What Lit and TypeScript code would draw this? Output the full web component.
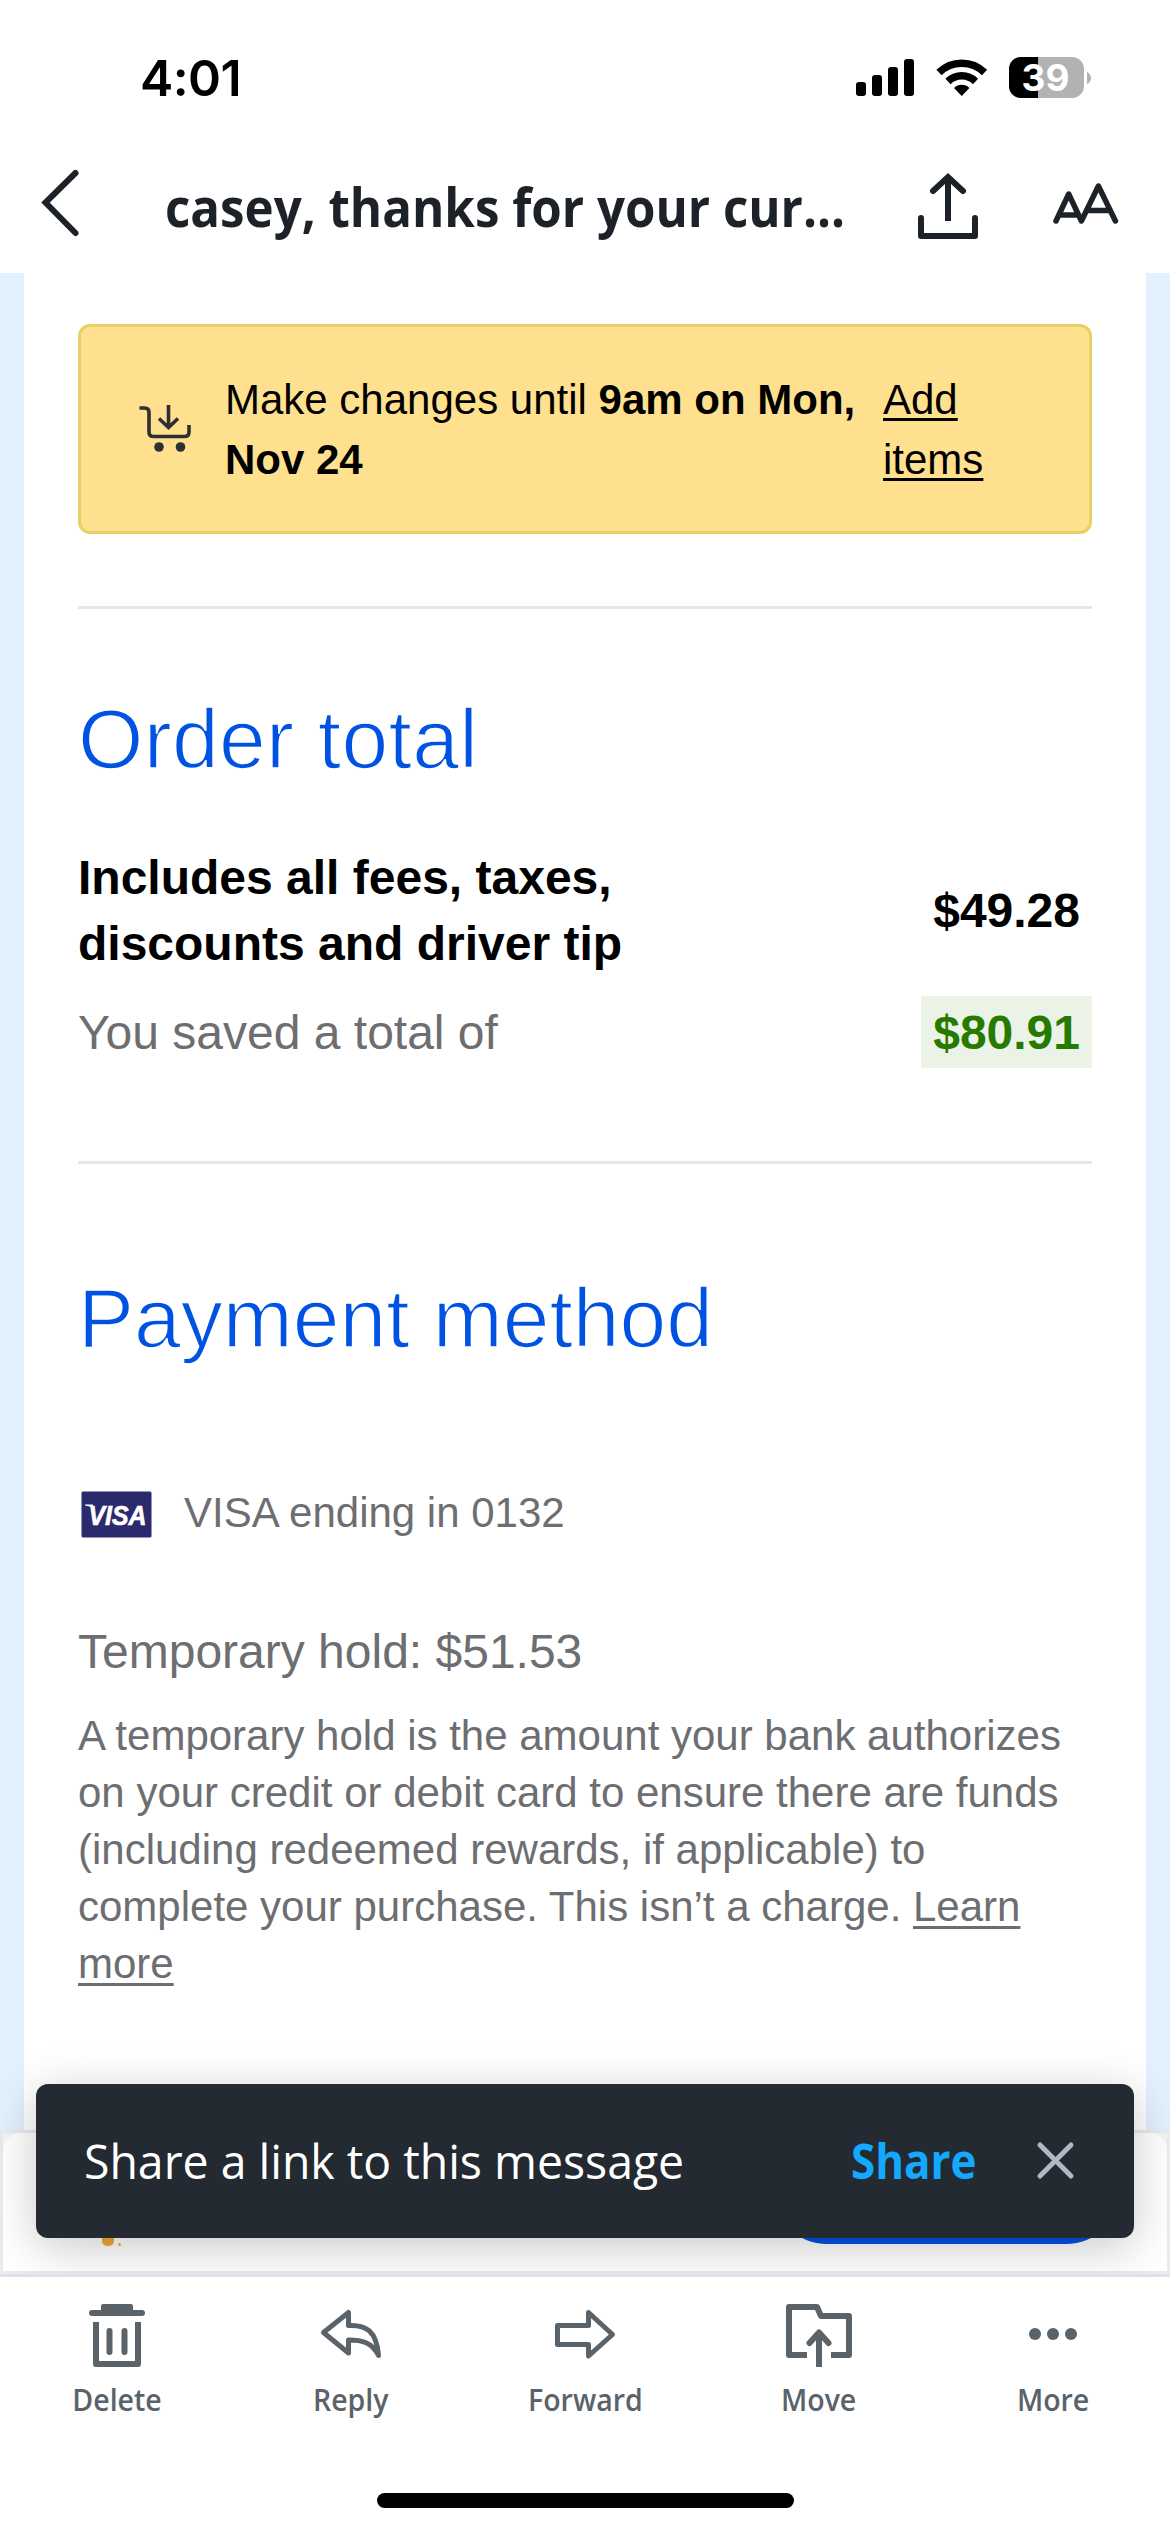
import { LitElement, html, css, svg } from "lit";
import { customElement } from "lit/decorators.js";

const actions = [
  {
    label: "Delete",
    icon: svg`<path fill="currentColor" stroke="none" d="M14 9h43a3 3 0 0 1 0 6H7a3 3 0 0 1 0-6h9V5q0-2 2-2h28q2 0 2 2v4z"/>
      <path d="M11 21v42h42V21" /><path stroke-linecap="round" d="M24.500 30v21M39.500 30v21"/>`,
  },
  {
    label: "Reply",
    icon: svg`<path stroke-width="5" d="M4.500 31.500 29.500 11.500V24.500C47 23.500 57.500 30 59.500 54.500C53 41 43 39 29.500 39V52z"/>`,
  },
  {
    label: "Forward",
    icon: svg`<path stroke-width="5" d="M4.500 24.500H35.500V11.500L59.500 33.500L35.500 55V43.500H4.500z"/>`,
  },
  {
    label: "Move",
    icon: svg`<path d="M20 54H2V6H30L34 15H62V54H44"/><path d="M32 66V32"/><path stroke-linecap="round" d="M22.500 42 32 31.500 41.500 42"/>`,
  },
  {
    label: "More",
    icon: svg`<g fill="currentColor" stroke="none"><circle cx="14" cy="33" r="6"/><circle cx="32" cy="33" r="6"/><circle cx="50" cy="33" r="6"/></g>`,
  },
];

@customElement("status-bar")
class StatusBar extends LitElement {
  static styles = css`
    :host { display: flex; height: 156px; box-sizing: border-box; padding: 48px 78px 0 140px; justify-content: space-between; align-items: flex-start; }
    .time { font: 600 50px/60px Inter, sans-serif; color: #000; letter-spacing: -0.6px; }
    svg { display: block; }
    .level { font: 700 37px Inter, sans-serif; fill: #fff; }
  `;
  render() {
    return html`
      <div class="time">4:01</div>
      <svg width="236" height="60" viewBox="856 48 236 60">
        <rect x="856" y="82" width="10" height="14" rx="3" />
        <rect x="872" y="75" width="10" height="21" rx="3" />
        <rect x="888" y="67" width="10" height="29" rx="3" />
        <rect x="904" y="59" width="10" height="37" rx="3" />
        <g fill="none" stroke="#000" stroke-width="7.500">
          <path d="M939 72.500a32.500 32.500 0 0 1 45.500 0" />
          <path d="M948 81.500a19.500 19.500 0 0 1 27.500 0" />
        </g>
        <path d="M961.700 96l-7.700-8a11 11 0 0 1 15.400 0z" />
        <rect x="1009" y="57" width="75" height="41" rx="12" fill="#b2b2b2" />
        <path d="M1038 57h-17a12 12 0 0 0-12 12v17a12 12 0 0 0 12 12h17z" />
        <path d="M1087 72q4 2 4 6t-4 6z" fill="#b2b2b2" />
        <text class="level" x="1045.500" y="91" text-anchor="middle">39</text>
      </svg>
    `;
  }
}

@customElement("message-header")
class MessageHeader extends LitElement {
  static styles = css`
    :host { display: flex; height: 117px; align-items: flex-start; color: #1d2228; }
    .title { flex: none; width: 780px; box-sizing: border-box; padding: 14px 0 0 84px; margin: 0; font: 700 54px/72px "Open Sans", sans-serif; white-space: nowrap; }
    .fit { display: inline-block; transform: scaleX(0.912); transform-origin: left; }
    svg { display: block; flex: none; fill: none; stroke: currentColor; stroke-width: 6; stroke-linecap: round; stroke-linejoin: round; }
    .back { margin-left: 39px; }
    .share { margin-left: 54px; }
    .size { margin-left: 69px; }
  `;
  render() {
    return html`
      <svg class="back" width="42" height="90" viewBox="39 156 42 90"><path stroke-linejoin="miter" d="M75.500 173L45.500 202.500L75.500 233" /></svg>
      <h1 class="title"><span class="fit">casey, thanks for your cur...</span></h1>
      <svg class="share" width="66" height="90" viewBox="915 156 66 90">
        <path d="M921 218v18h54v-18" />
        <path d="M933 191l15-14 15 14" stroke-linejoin="miter" />
        <path d="M948 178v43" stroke-linecap="butt" />
      </svg>
      <svg class="size" width="70" height="90" viewBox="1050 156 70 90">
        <path stroke-width="5.500" d="M1056 221l12.700-27 12.700 27 17-35 17 35M1060 215h17M1087 210.500h22" />
      </svg>
    `;
  }
}

@customElement("order-banner")
class OrderBanner extends LitElement {
  static styles = css`
    :host { display: flex; box-sizing: border-box; height: 210px; align-items: center; padding-left: 57px; border: 3px solid #e8d064; border-radius: 12px; background: #ffe08f; color: #000; font: 42px/60px "Liberation Sans", sans-serif; }
    .text { width: 640px; margin: 2px 0 0 31px; }
    .add { width: 120px; margin: 2px 0 0 18px; color: #000; text-decoration-thickness: 3px; text-underline-offset: 4px; text-decoration-skip-ink: none; }
  `;
  render() {
    return html`
      <svg width="56" height="56" viewBox="0 0 56 56" fill="none" stroke="#2e2f32" stroke-width="3.600">
        <path d="M1.500 7h5q4.500 0 4.500 4.500v19.500q0 4.500 4.500 4.500h31q4.500 0 4.500-4.500v-7" />
        <path d="M30.500 4v22M21 17.500l9.500 9 9.500-9" />
        <g fill="#2e2f32" stroke="none"><circle cx="21" cy="46" r="4.800" /><circle cx="42.500" cy="46" r="4.800" /></g>
      </svg>
      <div class="text">Make changes until <b>9am on Mon, Nov 24</b></div>
      <a class="add" href="#">Add items</a>
    `;
  }
}

@customElement("share-toast")
class ShareToast extends LitElement {
  static styles = css`
    :host { display: flex; align-items: center; box-sizing: border-box; padding: 0 57px 0 48px; border-radius: 12px; background: #232a31; color: #fff; box-shadow: 0 9px 48px rgba(0, 0, 0, 0.22); font: 48px/66px "Open Sans", sans-serif; }
    .text { flex: 1; white-space: nowrap; }
    .share { width: 184px; color: #12a9ff; font-weight: 700; }
    .fit { display: inline-block; transform: scaleX(0.966); transform-origin: left; }
    .share .fit { transform: scaleX(0.915); }
    svg { display: block; fill: none; stroke: #b0b9c1; stroke-width: 5; stroke-linecap: round; }
  `;
  render() {
    return html`
      <span class="text"><span class="fit">Share a link to this message</span></span>
      <span class="share"><span class="fit">Share</span></span>
      <svg width="42" height="42" viewBox="0 0 42 42"><path d="M5 5l31 31M36 5L5 36" /></svg>
    `;
  }
}

@customElement("action-bar")
class ActionBar extends LitElement {
  static styles = css`
    :host { display: block; height: 258px; box-sizing: border-box; border-top: 3px solid #e0e1e9; background: #fff; color: #5b636a; }
    .row { display: grid; grid-template-columns: repeat(5, 1fr); padding-top: 24px; height: 192px; }
    .item { display: flex; flex-direction: column; align-items: center; gap: 10px; font: 600 30px/45px "Open Sans", sans-serif; }
    .label { transform: scaleX(0.95); }
    svg { display: block; overflow: visible; fill: none; stroke: currentColor; stroke-width: 6; stroke-linejoin: round; }
    .home { width: 417px; height: 15px; border-radius: 8px; background: #000; margin: 0 auto; }
  `;
  render() {
    return html`
      <div class="row">
        ${actions.map(
          (a) => html`<div class="item">
            <svg width="64" height="66" viewBox="0 0 64 66">${a.icon}</svg>
            <span class="label">${a.label}</span>
          </div>`
        )}
      </div>
      <div class="home"></div>
    `;
  }
}

@customElement("app-root")
class AppRoot extends LitElement {
  static styles = css`
    :host { display: flex; flex-direction: column; position: relative; width: 1170px; height: 2532px; overflow: hidden; background: #fff; font-family: "Liberation Sans", Arial, sans-serif; }
    .mail { height: 1857px; box-sizing: border-box; border: solid #e3f0fd; border-width: 0 24px; padding: 51px 54px 0; overflow: hidden; }
    .rule { height: 3px; background: #e6e6e7; }
    .rule.first { margin-top: 72px; }
    h2 { margin: 0; font-weight: 400; font-size: 84px; line-height: 96px; color: #0053e2; -webkit-text-stroke: 1.6px #fff; white-space: nowrap; }
    .total { margin-top: 82px; letter-spacing: 0.3px; }
    .row { display: flex; align-items: center; justify-content: space-between; font-size: 48px; line-height: 66px; }
    .fees { margin-top: 58px; font-weight: 700; }
    .fees .label { width: 600px; }
    .amount { padding-right: 12px; }
    .saved { margin-top: 19px; color: #6d6e71; }
    .saved .label { padding-top: 2px; }
    .badge { background: #eaf3e6; color: #267a00; font-weight: 700; padding: 1px 12px 0; line-height: 71px; }
    .second { margin-top: 93px; }
    .method { margin-top: 106px; }
    .card { display: flex; align-items: center; gap: 32px; margin-top: 117px; font-size: 42px; line-height: 60px; color: #6d6e71; }
    .card svg { display: block; margin: 2px 0 0 3px; }
    .visa { font: italic 700 28px "Liberation Sans", sans-serif; fill: #fff; stroke: #fff; stroke-width: 0.7px; }
    .hold { margin-top: 76px; font-size: 48px; line-height: 66px; color: #6d6e71; }
    .note { margin: 22px 0 0; font-size: 42px; line-height: 57px; color: #6d6e71; }
    .note a { color: inherit; text-decoration-thickness: 3px; text-underline-offset: 5px; text-decoration-skip-ink: none; }
    .promo { height: 144px; box-sizing: border-box; border: 3px solid #e8ecef; background: #f5f5f5; overflow: hidden; }
    .sheet { display: flex; justify-content: space-between; height: 138px; border-radius: 18px 18px 0 0; background: #fff; padding: 0 47px 0 99px; }
    .button { width: 347px; height: 108px; margin-top: 3px; border-radius: 54px; background: #0053e2; }
    .mark { display: block; margin-top: 93px; }
    share-toast { position: absolute; left: 36px; top: 2084px; width: 1098px; height: 154px; }
    action-bar { position: relative; }
  `;
  render() {
    return html`
      <status-bar></status-bar>
      <message-header></message-header>
      <main class="mail">
        <order-banner></order-banner>
        <div class="rule first"></div>
        <h2 class="total">Order total</h2>
        <div class="row fees">
          <div class="label">Includes all fees, taxes, discounts and driver tip</div>
          <div class="amount">$49.28</div>
        </div>
        <div class="row saved">
          <div class="label">You saved a total of</div>
          <div class="badge">$80.91</div>
        </div>
        <div class="rule second"></div>
        <h2 class="method">Payment method</h2>
        <div class="card">
          <svg width="71" height="47" viewBox="0 0 71 47">
            <rect x="0.500" y="0.500" width="70" height="46" rx="1.500" fill="#2b2a6c" />
            <path d="M4 13.500h8v3.500q-3-2-8-2.500z" fill="#fff" />
            <text class="visa" x="7.500" y="33.500" textLength="58" lengthAdjust="spacingAndGlyphs">VISA</text>
          </svg>
          <span>VISA ending in 0132</span>
        </div>
        <div class="hold">Temporary hold: $51.53</div>
        <p class="note">
          A temporary hold is the amount your bank authorizes on your credit or debit card to ensure there are funds
          (including redeemed rewards, if applicable) to complete your purchase. This isn’t a charge. <a href="#">Learn more</a>
        </p>
      </main>
      <div class="promo">
        <div class="sheet">
          <svg class="mark" width="24" height="24" viewBox="0 0 24 24" fill="#f2ad2e"><rect x="0" y="0" width="12" height="20" rx="5" /><circle cx="17.500" cy="18.500" r="1.500" /></svg>
          <div class="button"></div>
        </div>
      </div>
      <share-toast></share-toast>
      <action-bar></action-bar>
    `;
  }
}
